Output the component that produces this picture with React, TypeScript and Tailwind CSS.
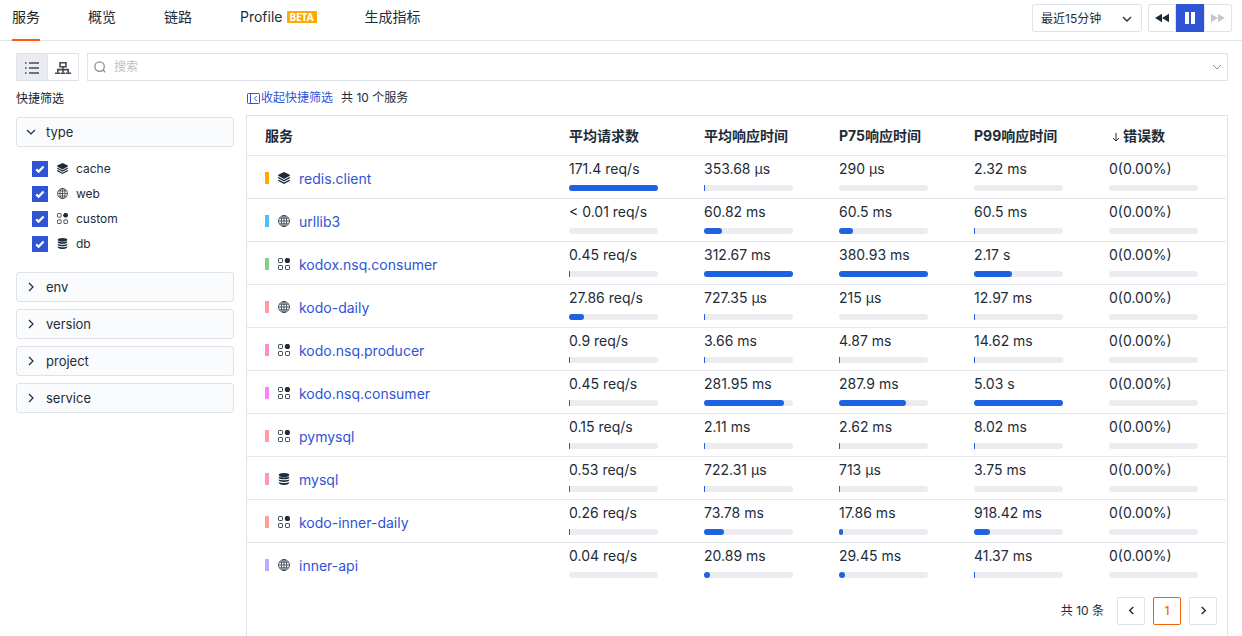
import React, { useState } from "react";

type Kind = "cache" | "web" | "custom" | "db";

type Metric = { text: string; fill: number };

type Service = { name: string; kind: Kind; mark: string; metrics: Metric[] };

const m = (text: string, fill: number): Metric => ({ text, fill });

const none = m("0(0.00%)", 0);

const services: Service[] = [
  { name: "redis.client", kind: "cache", mark: "bg-[#ffaa00]", metrics: [m("171.4 req/s", 100), m("353.68 µs", 1), m("290 µs", 0), m("2.32 ms", 0), none] },
  { name: "urllib3", kind: "web", mark: "bg-[#4fc0ff]", metrics: [m("< 0.01 req/s", 0), m("60.82 ms", 20), m("60.5 ms", 16), m("60.5 ms", 1), none] },
  { name: "kodox.nsq.consumer", kind: "custom", mark: "bg-[#80cd8c]", metrics: [m("0.45 req/s", 1), m("312.67 ms", 100), m("380.93 ms", 100), m("2.17 s", 43), none] },
  { name: "kodo-daily", kind: "web", mark: "bg-[#ff9c9c]", metrics: [m("27.86 req/s", 17), m("727.35 µs", 1), m("215 µs", 0), m("12.97 ms", 1), none] },
  { name: "kodo.nsq.producer", kind: "custom", mark: "bg-[#ff8fc8]", metrics: [m("0.9 req/s", 1), m("3.66 ms", 1), m("4.87 ms", 1), m("14.62 ms", 1), none] },
  { name: "kodo.nsq.consumer", kind: "custom", mark: "bg-[#ff80ff]", metrics: [m("0.45 req/s", 1), m("281.95 ms", 90), m("287.9 ms", 75), m("5.03 s", 100), none] },
  { name: "pymysql", kind: "custom", mark: "bg-[#ff9c9c]", metrics: [m("0.15 req/s", 1), m("2.11 ms", 1), m("2.62 ms", 1), m("8.02 ms", 1), none] },
  { name: "mysql", kind: "db", mark: "bg-[#ff99ae]", metrics: [m("0.53 req/s", 1), m("722.31 µs", 1), m("713 µs", 1), m("3.75 ms", 0), none] },
  { name: "kodo-inner-daily", kind: "custom", mark: "bg-[#ff9c9c]", metrics: [m("0.26 req/s", 1), m("73.78 ms", 23), m("17.86 ms", 5), m("918.42 ms", 18), none] },
  { name: "inner-api", kind: "web", mark: "bg-[#b9adff]", metrics: [m("0.04 req/s", 0), m("20.89 ms", 7), m("29.45 ms", 7), m("41.37 ms", 1), none] },
];

const columns = ["平均请求数", "平均响应时间", "P75响应时间", "P99响应时间", "错误数"];

function KindIcon({ kind, className }: { kind: Kind; className: string }) {
  if (kind === "cache") {
    return (
      <svg viewBox="0 0 24 24" className={className} fill="currentColor" aria-hidden="true">
        <path d="M12 0 23.6 5.4V7.6L12 14 .4 7.6V5.4Z" />
        <path d="M.4 9.6 12 15.9 23.6 9.6V12.6L12 19 .4 12.6Z" />
        <path d="M.4 14.8 12 21 23.6 14.8V17.8L12 24 .4 17.8Z" />
      </svg>
    );
  }
  if (kind === "web") {
    return (
      <svg viewBox="0 0 24 24" className={className} fill="none" stroke="currentColor" strokeWidth="1.5" aria-hidden="true">
        <circle cx="12" cy="12" r="11" />
        <ellipse cx="12" cy="12" rx="5.4" ry="11" />
        <path d="M12 1v22M1 12h22M2.6 6.4h18.8M2.6 17.6h18.8" />
      </svg>
    );
  }
  if (kind === "custom") {
    return (
      <svg viewBox="0 0 24 24" className={className} fill="none" stroke="currentColor" strokeWidth="1.8" aria-hidden="true">
        <rect x="1" y="1" width="8" height="8" rx="1.6" />
        <rect x="1" y="15" width="8" height="8" rx="1.6" />
        <rect x="15" y="15" width="8" height="8" rx="1.6" />
        <circle cx="18.8" cy="5" r="5.2" fill="currentColor" stroke="none" />
      </svg>
    );
  }
  return (
    <svg viewBox="0 0 24 24" className={className} fill="currentColor" aria-hidden="true">
      <ellipse cx="12" cy="4" rx="10.4" ry="4" />
      <path d="M1.6 7.2C4 9.6 20 9.6 22.4 7.2V9.4C21 13.8 3 13.8 1.6 9.4Z" />
      <path d="M1.6 12.6C4 15.4 20 15.4 22.4 12.6V14.6C21 19 3 19 1.6 14.6Z" />
      <path d="M1.6 18C4 20.8 20 20.8 22.4 18V20C21 25.2 3 25.2 1.6 20Z" />
    </svg>
  );
}

function Chevron({ dir, className }: { dir: "down" | "left" | "right"; className: string }) {
  const d = dir === "down" ? "M1 3l4 4 4-4" : dir === "left" ? "M7 1 3 5l4 4" : "M3 1l4 4-4 4";
  return (
    <svg viewBox="0 0 10 10" className={className} fill="none" stroke="currentColor" aria-hidden="true">
      <path d={d} />
    </svg>
  );
}

function Header() {
  const tab = "flex h-[41px] items-start border-b-2 pt-[6px] leading-[22px]";
  return (
    <header className="flex h-[41px] items-start justify-between border-b border-[#e2e4ea] pr-[10px] pl-3">
      <nav className="flex gap-12 whitespace-nowrap">
        <a href="#services" className={`${tab} border-[#ff5c0a] text-[#1d1d1d]`}>服务</a>
        <a href="#overview" className={`${tab} border-transparent`}>概览</a>
        <a href="#traces" className={`${tab} border-transparent`}>链路</a>
        <a href="#profile" className={`${tab} border-transparent`}>
          Profile
          <span className="mt-[5px] ml-1 flex h-3 w-[30px] items-center justify-center rounded-[1px] bg-[#ffaa00] font-['Noto_Sans',sans-serif] text-[10px] font-bold text-white">
            BETA
          </span>
        </a>
        <a href="#metrics" className={`${tab} border-transparent`}>生成指标</a>
      </nav>
      <div className="flex gap-[6px] pt-1">
        <div className="relative">
          <select
            aria-label="时间范围"
            className="h-7 w-[110px] appearance-none rounded-[2px] border border-[#e0e2e9] bg-white pt-[2px] pl-2 text-xs outline-none"
          >
            <option>最近15分钟</option>
            <option>最近1小时</option>
          </select>
          <Chevron dir="down" className="pointer-events-none absolute top-[10px] right-[10px] size-[10px] stroke-[1.3]" />
        </div>
        <div className="flex">
          <button type="button" aria-label="后退" className="flex h-7 w-7 items-center justify-center rounded-l-[2px] border border-[#e0e2e9]">
            <svg viewBox="0 0 14 10" className="h-[10px] w-[14px]" fill="currentColor" aria-hidden="true">
              <path d="M7 .8v8.4L0 5ZM14 .8v8.4L7 5Z" />
            </svg>
          </button>
          <button type="button" aria-label="暂停" className="flex h-7 w-7 items-center justify-center bg-[#2f54d4] text-white">
            <svg viewBox="0 0 10 12" className="h-3 w-[10px]" fill="currentColor" aria-hidden="true">
              <path d="M0 0h4v12H0ZM6 0h4v12H6Z" />
            </svg>
          </button>
          <button type="button" aria-label="前进" className="flex h-7 w-7 items-center justify-center rounded-r-[2px] border border-[#e0e2e9] text-[#c5c8d0]">
            <svg viewBox="0 0 14 10" className="h-[10px] w-[14px]" fill="currentColor" aria-hidden="true">
              <path d="M0 .8v8.4L7 5ZM7 .8v8.4L14 5Z" />
            </svg>
          </button>
        </div>
      </div>
    </header>
  );
}

function Toolbar() {
  return (
    <div className="flex gap-2">
      <div className="flex h-7 border border-[#e0e2e9] text-[#454a50]">
        <button type="button" aria-label="列表" className="flex w-[31px] items-center justify-center border-r border-[#e0e2e9] bg-[#ebecf2]">
          <svg viewBox="0 0 14 12" className="mt-[2px] h-3 w-[14px]" fill="currentColor" aria-hidden="true">
            <path d="M0 .2h1.6v1.6H0ZM0 5.2h1.6v1.6H0ZM0 10.2h1.6v1.6H0ZM4 .2h10v1.6H4ZM4 5.2h10v1.6H4ZM4 10.2h10v1.6H4Z" />
          </svg>
        </button>
        <button type="button" aria-label="拓扑" className="flex w-[30px] items-center justify-center">
          <svg viewBox="0 0 16 12" className="mt-[2px] h-3 w-4" fill="none" stroke="currentColor" strokeWidth="1.6" aria-hidden="true">
            <path d="M5 .8h6v4H5ZM8 4.8v6M2.8 10.8V7.6h10.4v3.2" />
            <path d="M0 11.2h5.4M6 11.2h4M10.6 11.2H16" />
          </svg>
        </button>
      </div>
      <label className="flex h-7 flex-1 items-center gap-2 border border-[#e0e2e9] pr-[5px] pl-[6px]">
        <svg viewBox="0 0 12 12" className="size-3 text-[#8c8f94]" fill="none" stroke="currentColor" strokeWidth="1.3" aria-hidden="true">
          <circle cx="5.6" cy="5.6" r="4.7" />
          <path d="m9 9 2.2 2.2" />
        </svg>
        <input type="text" aria-label="搜索" placeholder="搜索" className="min-w-0 flex-1 text-xs outline-none placeholder:text-[#bfc1c7]" />
        <Chevron dir="down" className="size-[10px] text-[#8a8d93]" />
      </label>
    </div>
  );
}

function Filters() {
  const [on, setOn] = useState<Record<Kind, boolean>>({ cache: true, web: true, custom: true, db: true });
  const group = "flex h-[30px] w-full items-center gap-[10px] rounded-[3px] border border-[#e0e2e9] bg-[#fafbfd] pl-[9px] text-left text-[13px]";
  return (
    <aside className="w-[218px] shrink-0">
      <h2 className="pt-2 pb-2 text-xs leading-5 text-[#1d1d1d]">快捷筛选</h2>
      <button type="button" className={group}>
        <Chevron dir="down" className="size-[10px] stroke-[1.2]" />
        type
      </button>
      <ul className="flex flex-col pt-[9px] pb-4 pl-4">
        {(Object.keys(on) as Kind[]).map((kind) => (
          <li key={kind}>
            <label className="flex h-[25px] items-center text-xs">
              <span className="grid size-4">
                <input
                  type="checkbox"
                  checked={on[kind]}
                  onChange={() => setOn({ ...on, [kind]: !on[kind] })}
                  className="peer col-start-1 row-start-1 size-4 appearance-none border border-[#2f54d4] checked:bg-[#2f54d4]"
                />
                <svg viewBox="0 0 16 16" className="pointer-events-none col-start-1 row-start-1 hidden size-4 text-white peer-checked:block" fill="none" stroke="currentColor" strokeWidth="2.2" aria-hidden="true">
                  <path d="m4.2 8.4 2.4 2.2 5-5.2" />
                </svg>
              </span>
              <KindIcon kind={kind} className="ml-[9px] size-[11px]" />
              <span className="ml-2">{kind}</span>
            </label>
          </li>
        ))}
      </ul>
      <div className="flex flex-col gap-[7px]">
        {["env", "version", "project", "service"].map((name) => (
          <button key={name} type="button" className={group}>
            <Chevron dir="right" className="size-[10px] stroke-[1.2]" />
            {name}
          </button>
        ))}
      </div>
    </aside>
  );
}

function ServiceTable() {
  return (
    <table className="w-full table-fixed border-collapse text-left">
      <thead>
        <tr className="h-[39px] border-b border-[#e6e7ec]">
          <th className="pt-[2px] pl-[18px] font-bold">服务</th>
          {columns.map((title) => (
            <th key={title} className="w-[135px] pt-[2px] pl-[18px] font-bold whitespace-nowrap">
              {title === "错误数" ? (
                <span className="flex items-center gap-[3px] pl-[3px]">
                  <svg viewBox="0 0 8 10" className="mt-[2px] h-[10px] w-2" fill="none" stroke="currentColor" aria-hidden="true">
                    <path d="M4 1v8M1 6l3 3 3-3" />
                  </svg>
                  {title}
                </span>
              ) : (
                title
              )}
            </th>
          ))}
        </tr>
      </thead>
      <tbody>
        {services.map((s) => (
          <tr key={s.name} className="h-[43px] border-b border-[#e6e7ec] last:border-transparent">
            <td className="pt-[2px] pl-[18px]">
              <div className="flex items-center">
                <span className={`h-3 w-1 ${s.mark}`} />
                <KindIcon kind={s.kind} className="ml-[9px] size-3" />
                <a href={`#${s.name}`} className="ml-[9px] pt-[2px] leading-5 text-[#2f54d4]">{s.name}</a>
              </div>
            </td>
            {s.metrics.map((metric, i) => (
              <td key={i} className="px-[18px] pt-[2px] pb-[7px] align-top">
                <div className="leading-[22px] whitespace-nowrap">{metric.text}</div>
                <div className="mt-[5px] h-[6px] w-[90%] rounded-full bg-[#ebebf0]">
                  <div
                    className={`h-full bg-[#1d62e0] ${metric.fill > 1 ? "rounded-full" : ""}`}
                    style={{ width: `${metric.fill}%` }}
                  />
                </div>
              </td>
            ))}
          </tr>
        ))}
      </tbody>
    </table>
  );
}

function Pagination() {
  const box = "flex size-7 items-center justify-center rounded-[2px] border";
  return (
    <nav className="flex items-center justify-end gap-2 pt-[11px] pr-[9px] pb-4 text-xs">
      <span className="pr-[5px]">共 10 条</span>
      <button type="button" aria-label="上一页" className={`${box} border-[#e0e2e9]`}>
        <Chevron dir="left" className="size-[9px] stroke-[1.6]" />
      </button>
      <button type="button" className={`${box} border-[#f5600a] font-medium text-[#ff6600]`}>1</button>
      <button type="button" aria-label="下一页" className={`${box} border-[#e0e2e9]`}>
        <Chevron dir="right" className="size-[9px] stroke-[1.6]" />
      </button>
    </nav>
  );
}

export default function App() {
  return (
    <div className="flex min-h-screen flex-col bg-white font-['Inter','Noto_Sans_CJK_SC',sans-serif] text-sm text-[#1d2c38]">
      <Header />
      <main className="flex flex-1 flex-col pt-3 pr-[14px] pl-4">
        <Toolbar />
        <div className="flex flex-1 gap-3">
          <Filters />
          <section className="flex min-w-0 flex-1 flex-col">
            <div className="flex items-center gap-2 pt-[7px] pb-[7px] text-xs leading-5">
              <button type="button" className="flex items-center gap-[1px] pl-[1px] text-[#2f54d4]">
                <svg viewBox="0 0 13 11" className="h-[11px] w-[13px]" fill="none" stroke="currentColor" aria-hidden="true">
                  <rect x=".5" y=".5" width="12" height="10" rx=".8" />
                  <path d="M3.5.5v10M9.8 3 7.3 5.5 9.8 8" />
                </svg>
                收起快捷筛选
              </button>
              <span>共 10 个服务</span>
            </div>
            <div className="flex-1 border-x border-t border-[#e0e2e9] pr-[1px]">
              <ServiceTable />
              <Pagination />
            </div>
          </section>
        </div>
      </main>
    </div>
  );
}
